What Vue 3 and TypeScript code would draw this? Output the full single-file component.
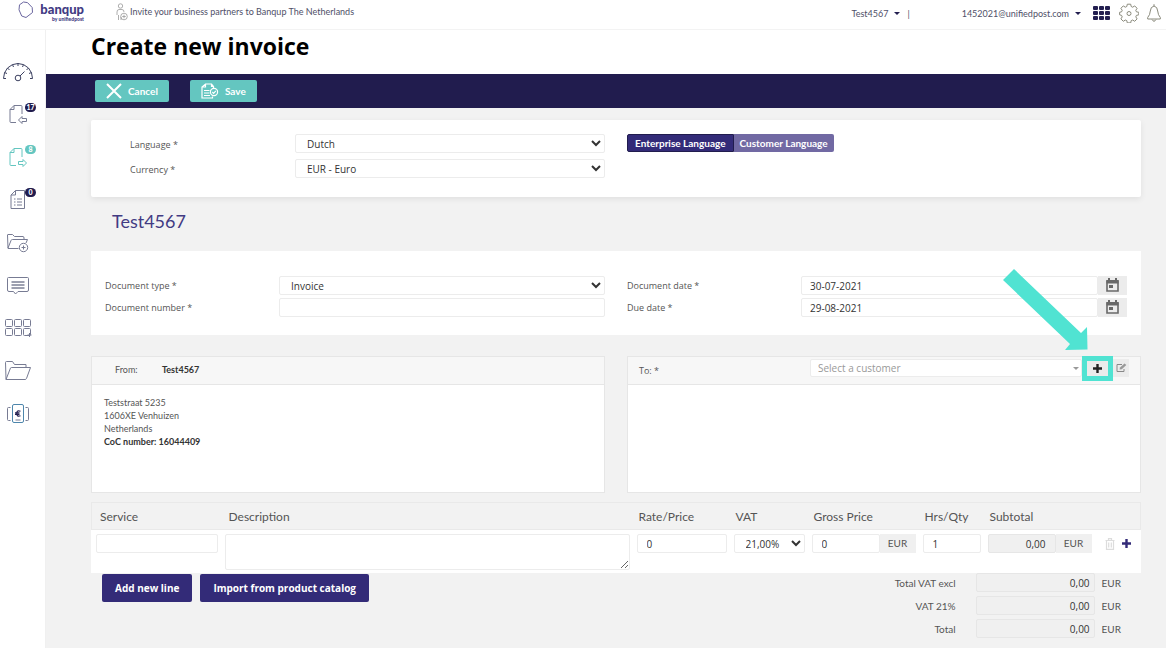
<script setup lang="ts">
import { ref } from 'vue'

interface NavItem {
  id: string
  label: string
  badge?: string
  active?: boolean
}

interface InvoiceLine {
  service: string
  description: string
  rate: string
  vat: string
  gross: string
  qty: string
  subtotal: string
}

const navItems: NavItem[] = [
  { id: 'dashboard', label: 'Dashboard' },
  { id: 'incoming', label: 'Incoming documents', badge: '17' },
  { id: 'outgoing', label: 'Outgoing documents', badge: '8', active: true },
  { id: 'orders', label: 'Orders', badge: '0' },
  { id: 'upload', label: 'Add to folder' },
  { id: 'messages', label: 'Messages' },
  { id: 'apps', label: 'Add apps' },
  { id: 'archive', label: 'Archive' },
  { id: 'payments', label: 'Payments' },
]

const language = ref('Dutch')
const currency = ref('EUR - Euro')
const documentType = ref('Invoice')
const documentNumber = ref('')
const documentDate = ref('30-07-2021')
const dueDate = ref('29-08-2021')
const customer = ref('')

const newLine = (): InvoiceLine => ({
  service: '',
  description: '',
  rate: '0',
  vat: '21,00%',
  gross: '0',
  qty: '1',
  subtotal: '0,00',
})
const lines = ref<InvoiceLine[]>([newLine()])
const addLine = () => lines.value.push(newLine())

const totals = [
  { id: 'excl', label: 'Total VAT excl', value: '0,00' },
  { id: 'vat', label: 'VAT 21%', value: '0,00' },
  { id: 'total', label: 'Total', value: '0,00' },
]
</script>

<template>
  <div class="app">
    <header class="topbar">
      <a class="brand" href="#">
        <svg class="brand-mark" width="18" height="20" viewBox="0 0 18 20" aria-hidden="true">
          <path d="M6.500 2L10.500 2.600L15.200 7.500L15.500 12.500L9 17.500L4.700 16L2 9.800L2.500 4.800Z" stroke-linejoin="round" />
        </svg>
        <span class="brand-text">
          <span class="brand-name">banqup</span>
          <span class="brand-sub">by unifiedpost</span>
        </span>
      </a>
      <a class="invite" href="#">
        <svg width="12" height="18" viewBox="0 0 12 18" aria-hidden="true">
          <circle cx="4.500" cy="3" r="2.200" />
          <path d="M1 12V9Q1 6.500 3 6.500H6Q8 6.500 8 9M2.500 12V17M5 14V17" />
          <circle cx="8" cy="13.500" r="3.300" />
          <path d="M8 11.700V15.300M6.200 13.500H9.800" />
        </svg>
        Invite your business partners to Banqup The Netherlands
      </a>
      <div class="account">
        <button class="menu company" type="button">Test4567<i class="caret"></i></button>
        <span class="divider">|</span>
        <button class="menu user" type="button">1452021@unifiedpost.com<i class="caret"></i></button>
        <button class="icon-btn" type="button" aria-label="Applications">
          <svg width="18" height="16" viewBox="0 0 18 16" fill="#231f50">
            <rect v-for="n in 9" :key="n" :x="((n - 1) % 3) * 6" :y="Math.floor((n - 1) / 3) * 5 + 1" width="5" height="4" rx="1" />
          </svg>
        </button>
        <button class="icon-btn gear" type="button" aria-label="Settings">
          <svg width="20" height="20" viewBox="0 0 20 20" class="line">
            <path d="M8.300 1.200h3.400l.5 2.300 1.500.7 2-1.300 2.400 2.400-1.300 2 .6 1.500 2.400.5v2.500l-2.400.6-.6 1.500 1.300 2-2.400 2.400-2-1.300-1.500.6-.5 2.300H8.300l-.5-2.300-1.500-.6-2 1.300-2.400-2.400 1.300-2-.6-1.500-2-.6V9.300l2-.5.6-1.500-1.300-2 2.400-2.400 2 1.300 1.500-.7z" />
            <circle cx="10" cy="10.500" r="2" />
          </svg>
        </button>
        <button class="icon-btn bell" type="button" aria-label="Notifications">
          <svg width="16" height="20" viewBox="0 0 16 20" class="line">
            <path d="M8 1.200V3M8 3Q4.500 3.800 4.300 8Q4 12 1.700 14.500V16H14.300V14.500Q12 12 11.700 8Q11.500 3.800 8 3ZM6 16.500Q8 20 10 16.500" />
          </svg>
        </button>
      </div>
    </header>

    <div class="body">
      <aside class="sidebar">
        <nav class="nav" aria-label="Main">
          <a v-for="item in navItems" :key="item.id" href="#" class="nav-link" :class="{ active: item.active }" :aria-label="item.label">
            <svg v-if="item.id === 'dashboard'" class="dark" width="32" height="22" viewBox="0 0 32 22">
              <path d="M1.500 17.500Q1.500 11.500 5.500 7Q10 2.500 16 2.500T26.500 7Q30.500 11.500 30.500 17.500M1.500 17.500H4M28 17.500H30.500M2.500 11.500L5 12.500M29.500 11.500L27 12.500M5.500 7L7.500 9M26.500 7L24.500 9M10.500 3.700L11.500 6M21.500 3.700L20.500 6M16 2.500V5M22.500 10.500L18 15" />
              <circle cx="16" cy="17" r="2.800" />
            </svg>
            <svg v-else-if="item.id === 'incoming' || item.id === 'outgoing'" width="20" height="22" viewBox="0 0 20 22">
              <path d="M8 18.500H3Q2 18.500 2 17.500V5.500L6 1.500H13Q14 1.500 14 2.500V10M6 1.500V5.500H2" />
              <path v-if="item.id === 'incoming'" d="M10.500 16L14 12.500V14.500H18.500V17.500H14V19.500Z" />
              <path v-else d="M18.500 16L15 12.500V14.500H10.500V17.500H15V19.500Z" />
            </svg>
            <svg v-else-if="item.id === 'orders'" width="20" height="22" viewBox="0 0 20 22">
              <path d="M3 19V6L7.500 1.500H16.500V19.500H3ZM7.500 1.500V6H3M6 10H7.500M9 10H14M6 13H7.500M9 13H14M6 16H7.500M9 16H14" />
            </svg>
            <svg v-else-if="item.id === 'upload'" width="24" height="20" viewBox="0 0 24 20">
              <path d="M12.500 15.500H2L1.500 2Q1.500 1.500 2 1.500H6.500L8.500 3.500H17Q18 3.500 18 5V6.500M2 15L5 7.500Q5.300 6.500 6.500 6.500H21.500L20 10" />
              <circle cx="17.500" cy="14.500" r="4.200" />
              <path d="M17.500 12.500V16.500M15.500 14.500H19.500" />
            </svg>
            <svg v-else-if="item.id === 'messages'" width="24" height="20" viewBox="0 0 24 20">
              <path d="M2.500 1.500H21.500Q22.500 1.500 22.500 2.500V14Q22.500 15.500 21 15.500H12L9.500 18L7.500 15.500H3Q1.500 15.500 1.500 14V2.500Q1.500 1.500 2.500 1.500Z" />
              <path class="strong" d="M5.500 6H18.500M5.500 9H18.500M5.500 12H18.500" />
            </svg>
            <svg v-else-if="item.id === 'apps'" width="28" height="20" viewBox="0 0 28 20">
              <rect v-for="n in 6" :key="n" :x="((n - 1) % 3) * 9 + 1.5" :y="n > 3 ? 10.5 : 1.5" width="7" height="7" rx="1" />
              <path d="M25.500 15V19M23.500 17H27.500" />
            </svg>
            <svg v-else-if="item.id === 'archive'" width="28" height="22" viewBox="0 0 28 22">
              <path d="M2 19.500L1.500 2.500Q1.500 1.500 2.500 1.500H8.500L10.500 4.500H22V7.500M2 19.500L6.500 8Q6.700 7.500 7.500 7.500H26.500L22.500 18.500Q22 19.500 21 19.500Z" />
            </svg>
            <svg v-else width="24" height="22" viewBox="0 0 24 22">
              <path d="M4.500 4.500H2.500Q1.500 4.500 1.500 5.500V16.500Q1.500 17.500 2.500 17.500H4.500M19.500 4.500H21.500Q22.500 4.500 22.500 5.500V16.500Q22.500 17.500 21.500 17.500H19.500" />
              <rect class="blue" x="6.500" y="1.500" width="11" height="18" rx="1.500" />
              <path d="M9.500 17H14.500" />
              <path class="euro" d="M14.500 8.300Q10.800 6.800 10.800 10.500T14.500 12.700M9 9.800H13.500M9 11.300H13.500" />
            </svg>
            <span v-if="item.badge" class="badge">{{ item.badge }}</span>
          </a>
        </nav>
      </aside>

      <main class="main">
        <h1 class="title">Create new invoice</h1>
        <div class="actions">
          <button class="action" type="button">
            <svg width="16" height="16" viewBox="0 0 16 16"><path d="M1 1L15 15M15 1L1 15" stroke-width="2" /></svg>
            Cancel
          </button>
          <button class="action" type="button">
            <svg width="18" height="16" viewBox="0 0 18 16">
              <path d="M11.500 13.500V15H1V4L4.500 1H10.500L12.500 3.500V5.500M4.500 1V4H1M3 7.500H8.500M3 10H8.500M3 12.500H9M10.500 1V3.500H12.500" stroke-width="1.200" />
              <circle cx="13" cy="9" r="3.600" stroke-width="1.200" />
              <path d="M11.300 9L12.600 10.300L14.800 7.900" stroke-width="1.200" />
            </svg>
            Save
          </button>
        </div>

        <form class="content" @submit.prevent>
          <section class="card settings">
            <div class="stack">
              <div class="field">
                <label for="language">Language *</label>
                <select id="language" v-model="language" class="control"><option>Dutch</option><option>English</option></select>
              </div>
              <div class="field">
                <label for="currency">Currency *</label>
                <select id="currency" v-model="currency" class="control"><option>EUR - Euro</option></select>
              </div>
            </div>
            <div class="toggle">
              <button type="button" class="on">Enterprise Language</button>
              <button type="button">Customer Language</button>
            </div>
          </section>

          <h2 class="company-name">Test4567</h2>

          <section class="card document">
            <div class="stack">
              <div class="field">
                <label for="doc-type">Document type *</label>
                <select id="doc-type" v-model="documentType" class="control"><option>Invoice</option><option>Credit note</option></select>
              </div>
              <div class="field">
                <label for="doc-number">Document number *</label>
                <input id="doc-number" v-model="documentNumber" class="control" type="text" />
              </div>
            </div>
            <div class="stack dates">
              <div class="field">
                <label for="doc-date">Document date *</label>
                <input id="doc-date" v-model="documentDate" class="control" type="text" />
                <button class="calendar" type="button" aria-label="Pick document date">
                  <svg width="13" height="15" viewBox="0 0 13 15"><path d="M1 3H12V13H1Z" fill="none" stroke="#686868" stroke-width="1.600" /><path d="M.5 2H12.500V5.500H.500ZM2 0H4V3H2ZM9 0H11V3H9ZM3 7H7V10H3Z" fill="#686868" /></svg>
                </button>
              </div>
              <div class="field">
                <label for="due-date">Due date *</label>
                <input id="due-date" v-model="dueDate" class="control" type="text" />
                <button class="calendar" type="button" aria-label="Pick due date">
                  <svg width="13" height="15" viewBox="0 0 13 15"><path d="M1 3H12V13H1Z" fill="none" stroke="#686868" stroke-width="1.600" /><path d="M.5 2H12.500V5.500H.500ZM2 0H4V3H2ZM9 0H11V3H9ZM3 7H7V10H3Z" fill="#686868" /></svg>
                </button>
              </div>
            </div>
          </section>

          <div class="parties">
            <section class="panel">
              <div class="panel-head from">
                <span class="from-label">From:</span>
                <strong>Test4567</strong>
              </div>
              <address class="address">
                Teststraat 5235<br />1606XE Venhuizen<br />Netherlands<br />
                <strong>CoC number: 16044409</strong>
              </address>
            </section>
            <section class="panel">
              <div class="panel-head to">
                <label for="customer">To: *</label>
                <div class="picker">
                  <select id="customer" v-model="customer"><option value="">Select a customer</option></select>
                  <i class="caret"></i>
                </div>
                <div class="add-customer">
                  <button type="button" aria-label="Add customer">
                    <svg width="9" height="9" viewBox="0 0 9 9"><path d="M4.500 0V9M0 4.500H9" stroke="#222" stroke-width="2.400" /></svg>
                  </button>
                  <svg class="pointer" width="85" height="82" viewBox="0 0 85 82" aria-hidden="true">
                    <path d="M11 0L0 11L67 75L62 81L84.500 80.500L84 58L78 64Z" fill="#50e3d2" />
                  </svg>
                </div>
                <button class="edit" type="button" aria-label="Edit customer">
                  <svg width="11" height="10" viewBox="0 0 11 10"><path d="M8 6V8.500H1V1.500H6" fill="none" stroke="#888" /><path d="M3.500 6.500L4 4.500L8.500 .500L10.300 2L5.800 6.200Z" fill="#999" /></svg>
                </button>
              </div>
            </section>
          </div>

          <table class="lines">
            <colgroup>
              <col class="w-service" /><col /><col class="w-rate" /><col class="w-vat" />
              <col class="w-money" /><col class="w-qty" /><col class="w-money" /><col class="w-tools" />
            </colgroup>
            <thead>
              <tr>
                <th>Service</th><th>Description</th><th>Rate/Price</th><th>VAT</th>
                <th>Gross Price</th><th>Hrs/Qty</th><th>Subtotal</th><th></th>
              </tr>
            </thead>
            <tbody>
              <tr v-for="(line, i) in lines" :key="i">
                <td><input v-model="line.service" class="control" type="text" aria-label="Service" /></td>
                <td><textarea v-model="line.description" class="control" aria-label="Description"></textarea></td>
                <td><input v-model="line.rate" class="control" type="text" aria-label="Rate/Price" /></td>
                <td><select v-model="line.vat" class="control vat" aria-label="VAT"><option>21,00%</option><option>9,00%</option></select></td>
                <td><div class="money"><input v-model="line.gross" class="control" type="text" aria-label="Gross Price" /><span class="unit">EUR</span></div></td>
                <td><input v-model="line.qty" class="control" type="text" aria-label="Hrs/Qty" /></td>
                <td><div class="money"><input :value="line.subtotal" class="control readonly" type="text" readonly aria-label="Subtotal" /><span class="unit">EUR</span></div></td>
                <td>
                  <div class="tools">
                    <button type="button" aria-label="Delete line">
                      <svg width="10" height="12" viewBox="0 0 10 12"><path d="M.5 2.500H9.500M3.500 2.500V.700H6.500V2.500M1.500 3V11.300H8.500V3M3.700 4.500V9.500M6.300 4.500V9.500" fill="none" stroke="#dcdcdc" stroke-width="1.200" /></svg>
                    </button>
                    <button type="button" aria-label="Add line" @click="addLine">
                      <svg width="9" height="9" viewBox="0 0 9 9"><path d="M4.500 0V9M0 4.500H9" stroke="#332b78" stroke-width="2.400" /></svg>
                    </button>
                  </div>
                </td>
              </tr>
            </tbody>
          </table>

          <div class="summary">
            <div class="line-buttons">
              <button type="button" @click="addLine">Add new line</button>
              <button type="button">Import from product catalog</button>
            </div>
            <div class="totals">
              <div v-for="row in totals" :key="row.id" class="total">
                <label :for="row.id">{{ row.label }}</label>
                <input :id="row.id" class="control readonly" type="text" readonly :value="row.value" />
                <span>EUR</span>
              </div>
            </div>
          </div>
        </form>
      </main>
    </div>
  </div>
</template>

<style>
body {
  margin: 0;
  background: #f2f2f2;
}
</style>

<style scoped>
.app {
  display: flex;
  flex-direction: column;
  min-height: 100vh;
  font-family: Lato, "Liberation Sans", sans-serif;
  font-size: 10px;
  color: #555;
}
.app * {
  box-sizing: border-box;
}
button,
input,
select,
textarea {
  margin: 0;
  font: inherit;
  color: inherit;
}
button {
  padding: 0;
  border: 0;
  background: none;
}
a {
  color: inherit;
  text-decoration: none;
}
svg {
  display: block;
  flex: none;
}

/* Top bar */
.topbar {
  display: flex;
  align-items: flex-start;
  height: 30px;
  padding: 0 4px 0 17px;
  background: #fff;
  border-bottom: 1px solid #f3f3f3;
  color: #4f5068;
  font-size: 9px;
}
.brand {
  display: flex;
  gap: 4px;
}
.brand-mark {
  fill: none;
  stroke: #6b67a0;
}
.brand-text {
  display: flex;
  flex-direction: column;
  align-items: flex-end;
  width: 45px;
  padding-top: 1px;
  color: #423b83;
}
.brand-name {
  font-size: 13px;
  line-height: 16px;
  font-weight: 900;
}
.brand-sub {
  font-size: 5px;
  line-height: 5px;
  font-weight: 900;
}
.invite {
  display: flex;
  align-items: center;
  gap: 2px;
  height: 23px;
  margin-left: 32px;
}
.invite svg {
  fill: none;
  stroke: #999;
  stroke-width: 0.8;
}
.account {
  display: flex;
  align-items: center;
  height: 26px;
  margin-left: auto;
}
.menu {
  display: flex;
  align-items: center;
  gap: 6px;
}
.caret {
  border: 3px solid transparent;
  border-top-color: #231f50;
  border-bottom-width: 0;
}
.divider {
  margin: 0 52px 0 7px;
}
.icon-btn {
  margin-left: 12px;
}
.icon-btn.gear {
  margin-left: 8px;
}
.icon-btn.bell {
  margin-left: 7px;
}
.line {
  fill: none;
  stroke: #8a8a7c;
}

/* Side navigation */
.body {
  display: flex;
  flex: 1;
}
.sidebar {
  flex: none;
  width: 46px;
  padding-top: 21px;
  background: #fff;
  border-right: 1px solid #f0f0f0;
}
.nav {
  display: grid;
  grid-auto-rows: 1fr;
  height: 384px;
}
.nav-link {
  position: relative;
  display: flex;
  align-items: center;
  width: 36px;
  justify-content: center;
  color: #777b93;
}
.nav-link.active {
  color: #64c6c0;
}
.nav-link svg {
  fill: none;
  stroke: currentColor;
}
.nav-link .dark,
.nav-link .strong {
  stroke: #3b4060;
}
.nav-link .blue {
  stroke: #4d86ac;
}
.nav-link .euro {
  stroke: #231f50;
  stroke-width: 1.2;
}
.badge {
  position: absolute;
  top: 9px;
  right: 0;
  width: 11px;
  height: 9px;
  border-radius: 5px;
  background: #211c4e;
  color: #fff;
  font-size: 7px;
  line-height: 9px;
  font-weight: 900;
  text-align: center;
}
.active .badge {
  background: #64c6c0;
}

/* Page heading and actions */
.main {
  flex: 1;
  min-width: 0;
}
.title {
  margin: 0;
  padding: 0 45px;
  height: 44px;
  background: #fff;
  color: #000;
  font: bold 23px/32px "Open Sans", "Noto Sans", sans-serif;
}
.actions {
  display: flex;
  gap: 21px;
  align-items: center;
  height: 34px;
  padding: 0 49px;
  background: #211c4e;
}
.action {
  display: flex;
  align-items: center;
  justify-content: center;
  gap: 6px;
  height: 22px;
  padding: 0 11px;
  border-radius: 2px;
  background: #64c6c0;
  color: #fff;
  font-weight: 700;
}
.action svg {
  fill: none;
  stroke: #fff;
}

/* Form */
.content {
  padding: 12px 25px 10px 45px;
}
.card {
  display: grid;
  grid-template-columns: 1fr 1fr;
  column-gap: 22px;
  background: #fff;
}
.stack {
  display: flex;
  flex-direction: column;
}
.field {
  display: flex;
  align-items: center;
  height: 19px;
}
.field label {
  flex: none;
  font: 9px/12px "Open Sans", sans-serif;
}
.control {
  width: 100%;
  min-width: 0;
  height: 19px;
  padding: 0 8px;
  border: 1px solid #ececec;
  border-radius: 2px;
  background: #fff;
  color: #333;
  font: 10px/14px "Open Sans", sans-serif;
  outline: none;
}
select.control {
  padding: 0 7px;
}
.settings {
  padding: 14px 0 19px;
  border-radius: 2px;
  box-shadow: 0 2px 6px rgba(0, 0, 0, 0.08);
}
.settings .stack {
  gap: 6px;
  padding-left: 39px;
}
.settings label {
  width: 165px;
  padding-top: 3px;
}
.toggle {
  display: flex;
  height: 18px;
}
.toggle button {
  padding: 0 6px;
  border-radius: 0 2px 2px 0;
  background: #7169a3;
  color: #fff;
  font-weight: 700;
}
.toggle .on {
  padding: 0 7px;
  border: 1px solid #211c4e;
  border-radius: 2px 0 0 2px;
  background: #332b78;
}
.company-name {
  margin: 0;
  padding: 13px 21px 19px;
  color: #423b83;
  font-size: 18px;
  line-height: 22px;
  font-weight: 400;
}
.document {
  padding: 25px 0 18px;
}
.document .stack {
  gap: 3px;
  padding-left: 14px;
}
.document label {
  width: 174px;
}
.document .dates {
  padding: 0 14px 0 0;
}
.calendar {
  display: flex;
  flex: none;
  align-items: center;
  justify-content: center;
  width: 29px;
  height: 19px;
  background: #ececec;
}

/* Parties */
.parties {
  display: grid;
  grid-template-columns: 1fr 1fr;
  column-gap: 22px;
  margin-top: 21px;
}
.panel {
  min-height: 137px;
  border: 1px solid #e6e6e6;
  background: #fff;
}
.panel-head {
  display: flex;
  align-items: center;
  height: 28px;
  background: #f7f7f7;
  border-bottom: 1px solid #e6e6e6;
}
.from {
  padding: 0 23px 3px;
  font-size: 9px;
}
.from-label {
  width: 47px;
}
strong {
  color: #333;
  font-weight: 700;
}
.address {
  padding: 11px 12px;
  font-size: 9px;
  font-style: normal;
  line-height: 13px;
}
.to {
  padding: 0 11px 5px;
}
.to label {
  flex: none;
  width: 171px;
  padding-top: 5px;
  font: 9px/12px "Open Sans", sans-serif;
}
.picker {
  position: relative;
  flex: 1;
}
.picker select {
  display: block;
  width: 100%;
  height: 18px;
  padding: 0 7px;
  border: 1px solid #ececec;
  border-radius: 2px;
  appearance: none;
  background: #fff;
  color: #999;
  font: 10px/14px "Open Sans", sans-serif;
}
.picker .caret {
  position: absolute;
  top: 8px;
  right: 3px;
  border-top-color: #999;
}
.add-customer {
  position: relative;
  flex: none;
  border: 5px solid #50e3d2;
}
.add-customer button {
  display: flex;
  align-items: center;
  justify-content: center;
  width: 21px;
  height: 15px;
  background: #ebebeb;
}
.pointer {
  position: absolute;
  right: 20px;
  bottom: 25px;
}
.edit {
  display: flex;
  align-items: center;
  justify-content: center;
  width: 16px;
  height: 18px;
  background: #ececec;
}

/* Invoice lines */
.lines {
  width: 100%;
  margin-top: 9px;
  border-collapse: collapse;
  table-layout: fixed;
  background: #fff;
}
.w-service {
  width: 129px;
}
.w-rate {
  width: 97px;
}
.w-vat {
  width: 78px;
}
.w-money {
  width: 111px;
}
.w-qty {
  width: 65px;
}
.w-tools {
  width: 46px;
}
.lines thead {
  background: #f2f2f2;
  border: 1px solid #e9e9e9;
}
.lines th {
  height: 27px;
  padding: 0 6px;
  font-size: 12px;
  font-weight: 400;
  text-align: left;
}
.lines th:nth-child(-n + 2) {
  padding: 0 8px;
}
.lines td {
  padding: 4px 3px 3px 4px;
  vertical-align: top;
}
.lines td .control {
  padding: 0 9px;
}
.lines td .vat {
  padding: 0 0 0 7px;
}
textarea.control {
  display: block;
  height: 36px;
  resize: both;
}
.money {
  display: flex;
}
.unit {
  flex: none;
  width: 36px;
  height: 19px;
  line-height: 18px;
  background: #f0f0f0;
  text-align: center;
}
.readonly {
  background: #f0f0f0;
  border-color: #e6e6e6;
  text-align: right;
}
.tools {
  display: flex;
  align-items: center;
  gap: 7px;
  height: 19px;
  padding-left: 6px;
}

/* Footer of the form */
.summary {
  display: flex;
  justify-content: space-between;
  align-items: flex-start;
}
.line-buttons {
  display: flex;
  gap: 8px;
  padding: 1px 11px;
}
.line-buttons button {
  height: 28px;
  padding: 0 13px;
  border-radius: 2px;
  background: #332b78;
  color: #fff;
  font: bold 10px/14px "Open Sans", sans-serif;
}
.totals {
  display: flex;
  flex-direction: column;
  gap: 4px;
  padding: 0 20px 0 0;
}
.total {
  display: flex;
  align-items: center;
  justify-content: flex-end;
}
.total .control {
  width: 119px;
  margin: 0 7px 0 20px;
  padding: 0 4px;
}
</style>
